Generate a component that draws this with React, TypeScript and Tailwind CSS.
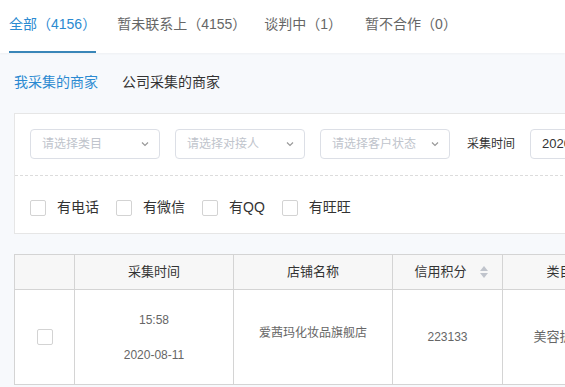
import React from "react";

const font = { fontFamily: '"Liberation Sans", "Noto Sans CJK SC", sans-serif' };

const tabs = [
  { label: "全部（4156）", active: true },
  { label: "暂未联系上（4155）" },
  { label: "谈判中（1）" },
  { label: "暂不合作（0）" },
];

function Chevron() {
  return (
    <svg width="10" height="10" viewBox="0 0 10 10" fill="none">
      <path d="M2 3.5 L5 6.5 L8 3.5" stroke="#999" strokeWidth="1.2" />
    </svg>
  );
}

function Select({ placeholder }: { placeholder: string }) {
  return (
    <div className="flex h-[30px] w-[130px] shrink-0 items-center justify-between rounded-[4px] border border-[#dcdfe6] bg-white pl-[11px] pr-[9px]">
      <span className="text-[12px] text-[#c0c4cc]">{placeholder}</span>
      <Chevron />
    </div>
  );
}

function Box() {
  return <span className="block h-4 w-4 shrink-0 rounded-[2px] border border-[#d3d3d3] bg-white" />;
}

function SortIcon() {
  return (
    <svg width="10" height="14" viewBox="0 0 10 14" className="ml-[12px]">
      <path d="M5 1 L9 6 L1 6 Z" fill="#c0c4cc" />
      <path d="M5 13 L9 8 L1 8 Z" fill="#c0c4cc" />
    </svg>
  );
}

const cols = "grid-cols-[60px_159px_159px_110px_114px]";

export default function App() {
  return (
    <div className="h-[387px] w-[565px] overflow-hidden bg-[#f7f9fc]" style={font}>
      <div className="flex h-[53px] w-full items-start bg-white pl-[9px] shadow-[0_1px_2px_rgba(0,0,0,0.04)]">
        {tabs.map((t, i) => (
          <div
            key={t.label}
            className={`relative flex h-[53px] items-center pb-[5px] text-[14px] ${
              t.active ? "text-[#2b8ad1]" : "text-[#666]"
            } ${i === 0 ? "mr-[21px]" : i === 1 ? "mr-[18px]" : "mr-[23px]"}`}
          >
            {t.label}
            {t.active && <span className="absolute bottom-0 left-0 h-[2px] w-full bg-[#3a86b8]" />}
          </div>
        ))}
      </div>

      <div className="flex h-[60px] items-center gap-6 pl-[14px] pb-[1px] text-[14px]">
        <span className="text-[#2b8ad1]">我采集的商家</span>
        <span className="text-[#333]">公司采集的商家</span>
      </div>

      <div className="ml-[14px] w-[640px] border border-[#e6e6e6] bg-white">
        <div className="flex items-center gap-[15px] px-[15px] pt-[15px] pb-[16px]">
          <Select placeholder="请选择类目" />
          <Select placeholder="请选择对接人" />
          <Select placeholder="请选择客户状态" />
          <span className="ml-[2px] shrink-0 whitespace-nowrap text-[12px] text-[#333]">采集时间</span>
          <div className="flex h-[30px] w-[150px] shrink-0 items-center rounded-[4px] border border-[#dcdfe6] pl-[11px] text-[13px] text-[#333]">
            2020-07-12
          </div>
        </div>
        <div className="border-t border-dashed border-[#dcdcdc]" />
        <div className="flex h-[57px] items-center px-[15px] pt-[6px] text-[14px] text-[#333]">
          {["有电话", "有微信", "有QQ", "有旺旺"].map((l) => (
            <div key={l} className="mr-[17px] flex items-center gap-[11px]">
              <Box />
              <span>{l}</span>
            </div>
          ))}
        </div>
      </div>

      <div className="ml-[14px] mt-[20px] w-[700px] border-l border-t border-[#d4d4d4] bg-white text-[13px]">
        <div className={`grid h-[35px] ${cols} bg-[#f7f7f7] text-[#333]`}>
          <div className="border-b border-r border-[#d4d4d4]" />
          <div className="flex items-center justify-center border-b border-r border-[#d4d4d4]">采集时间</div>
          <div className="flex items-center justify-center border-b border-r border-[#d4d4d4]">店铺名称</div>
          <div className="flex items-center justify-center border-b border-r border-[#d4d4d4] pl-[8px]">
            信用积分
            <SortIcon />
          </div>
          <div className="flex items-center justify-center border-b border-r border-[#d4d4d4]">类目</div>
        </div>
        <div className={`grid h-[95px] ${cols} text-[12px] text-[#666]`}>
          <div className="flex items-center justify-center border-b border-r border-[#d4d4d4]">
            <Box />
          </div>
          <div className="flex flex-col items-center justify-center gap-[17px] border-b border-r border-[#d4d4d4]">
            <span>15:58</span>
            <span>2020-08-11</span>
          </div>
          <div className="flex items-center justify-center border-b border-r border-[#d4d4d4] pb-[8px]">
            爱茜玛化妆品旗舰店
          </div>
          <div className="flex items-center justify-center border-b border-r border-[#d4d4d4]">223133</div>
          <div className="flex items-center justify-center border-b border-r border-[#d4d4d4] text-[13px]">美容护肤</div>
        </div>
      </div>
    </div>
  );
}
